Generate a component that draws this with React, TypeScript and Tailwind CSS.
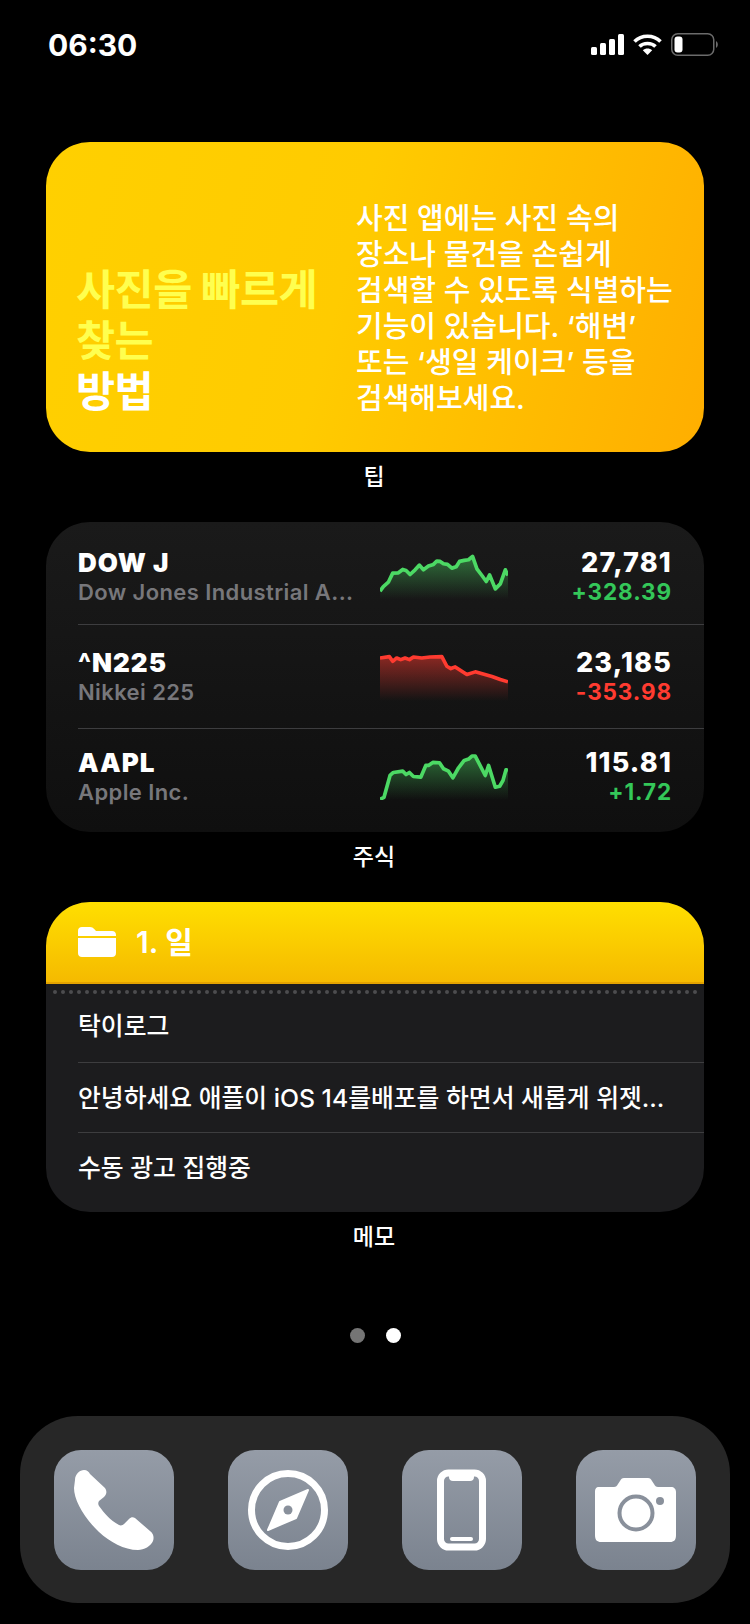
import React from "react";

type P = [number, number];

const series: { pts: P[]; top: number; bottom: number; color: string; id: string }[] = [
  {
    id: "g1", color: "#4cd964", top: 65, bottom: 205,
    pts: [[60,182],[70,168],[85,155],[98,128],[115,127],[128,117],[138,120],[150,132],[165,118],[178,104],[190,118],[205,107],[220,102],[230,92],[240,93],[250,100],[262,102],[275,113],[288,109],[298,93],[312,90],[325,88],[337,78],[350,115],[365,135],[378,153],[388,133],[405,175],[420,160],[435,118],[443,135]],
  },
  {
    id: "g2", color: "#ff3b30", top: 365, bottom: 510,
    pts: [[60,380],[88,376],[98,390],[110,380],[122,385],[135,380],[148,385],[160,377],[185,380],[210,377],[245,376],[260,405],[272,412],[285,407],[320,430],[345,422],[395,436],[420,445],[443,452]],
  },
  {
    id: "g3", color: "#4cd964", top: 665, bottom: 808,
    pts: [[60,806],[72,800],[90,735],[100,726],[128,722],[138,732],[148,726],[160,738],[182,740],[197,705],[205,705],[218,696],[238,697],[250,715],[265,722],[278,742],[295,712],[312,690],[325,686],[335,677],[345,677],[375,735],[385,705],[405,770],[418,767],[428,750],[437,718],[443,720]],
  },
];

function Spark({ i }: { i: number }) {
  const s = series[i];
  const h = s.bottom - s.top;
  const line = s.pts.map(([x, y]) => `${x - 60},${y - s.top}`).join(" ");
  return (
    <svg width="128" height={Math.round(h / 3)} viewBox={`0 0 383 ${h}`} preserveAspectRatio="none" className="block shrink-0">
      <defs>
        <linearGradient id={s.id} x1="0" y1="0" x2="0" y2="1">
          <stop offset="0" stopColor={s.color} stopOpacity={i === 1 ? 0.5 : 0.45} />
          <stop offset="1" stopColor={s.color} stopOpacity="0" />
        </linearGradient>
      </defs>
      <polygon points={`0,${h} ${line} 383,${h}`} fill={`url(#${s.id})`} />
      <polyline points={line} fill="none" stroke={s.color} strokeWidth="11" strokeLinejoin="round" />
    </svg>
  );
}

const stocks = [
  { sym: "DOW J", name: "Dow Jones Industrial A...", price: "27,781", chg: "+328.39", c: "text-[#34c759]", row: "h-[102px]", text: "mt-[10px]", chart: "mt-[4px]" },
  { sym: "^N225", name: "Nikkei 225", price: "23,185", chg: "-353.98", c: "text-[#ff3b30]", row: "h-[104px] border-t border-[#3d3d3f]", text: "mt-[3px]", chart: "mt-0" },
  { sym: "AAPL", name: "Apple Inc.", price: "115.81", chg: "+1.72", c: "text-[#34c759]", row: "h-[104px] border-t border-[#3d3d3f]", text: "mb-[6px]", chart: "mb-[9px]" },
];

function Label({ children }: { children: React.ReactNode }) {
  return <div className="h-[70px] pt-[10px] pr-[2px] text-center text-[23px] leading-[30px] font-medium text-white">{children}</div>;
}

function DockIcon({ children }: { children: React.ReactNode }) {
  return (
    <div className="w-[120px] h-[120px] rounded-[27px] bg-gradient-to-b from-[#959ca7] to-[#7b838f]">
      <svg width="120" height="120" viewBox="0 0 120 120">{children}</svg>
    </div>
  );
}

export default function App() {
  return (
    <div className="w-[750px] h-[1624px] bg-black overflow-hidden font-['Inter','Noto_Sans_CJK_KR',sans-serif] text-white">
      <div className="h-[142px] flex items-start justify-between pl-[48px] pr-[32px] pt-[26px]">
        <div className="text-[30px] leading-[38px] font-bold">06:30</div>
        <div className="flex items-center gap-[9px] pt-[7px]">
          <svg width="33" height="21" viewBox="0 0 33 21" fill="#fff">
            <rect x="0" y="13" width="6" height="8" rx="1.5" />
            <rect x="9" y="9" width="6" height="12" rx="1.5" />
            <rect x="18" y="5" width="6" height="16" rx="1.5" />
            <rect x="27" y="0" width="6" height="21" rx="1.5" />
          </svg>
          <svg width="29" height="21" viewBox="0 0 29 21" fill="none" stroke="#fff" strokeWidth="3.6">
            <path d="M1.5 7.5 C8.5 0.5 20.5 0.5 27.5 7.5" />
            <path d="M6.5 12.5 C10.5 8.5 18.5 8.5 22.5 12.5" />
            <path d="M14.5 21 L9.8 16.2 C12.5 13.8 16.5 13.8 19.2 16.2 Z" fill="#fff" stroke="none" />
          </svg>
          <svg width="47" height="23" viewBox="0 0 47 23" fill="none">
            <rect x="0.75" y="0.75" width="42" height="21.5" rx="6" stroke="#6b6b6b" strokeWidth="1.5" />
            <rect x="3.5" y="3.5" width="8" height="16" rx="3" fill="#fff" />
            <path d="M45 8 C46.3 8.7 46.8 10 46.8 11.5 C46.8 13 46.3 14.3 45 15 Z" fill="#6b6b6b" />
          </svg>
        </div>
      </div>

      <div className="mx-[46px]">
        <div className="h-[310px] rounded-[44px] bg-[linear-gradient(105deg,#ffd000_0%,#ffcb00_45%,#ffae00_100%)] flex justify-between">
          <div className="w-[270px] ml-[30px] mt-[122px] text-[42.5px] leading-[51px] font-bold tracking-[-0.5px] text-[#ffff4f] whitespace-nowrap">
            사진을 빠르게<br />찾는<br /><span className="text-white">방법</span>
          </div>
          <div className="w-[348px] mt-[59px] text-[29px] leading-[36px] font-medium text-white whitespace-nowrap">
            사진 앱에는 사진 속의<br />장소나 물건을 손쉽게<br />검색할 수 있도록 식별하는<br />기능이 있습니다. ‘해변’<br />또는 ‘생일 케이크’ 등을<br />검색해보세요.
          </div>
        </div>
        <Label>팁</Label>

        <div className="h-[310px] rounded-[44px] bg-gradient-to-b from-[#1a1a1a] to-[#0f0f0f] pl-[32px] flex flex-col">
          {stocks.map((s, i) => (
            <div key={s.sym} className={`flex items-center ${s.row}`}>
              <div className={`w-[302px] shrink-0 ${s.text}`}>
                <div className="text-[26px] leading-[28px] font-black tracking-[1px]">{s.sym}</div>
                <div className="text-[22px] leading-[30px] font-semibold tracking-[0.4px] text-[#77777b] whitespace-nowrap">{s.name}</div>
              </div>
              <div className={`shrink-0 ${s.chart}`}><Spark i={i} /></div>
              <div className={`flex-1 pr-[32px] text-right ${s.text}`}>
                <div className="text-[27px] leading-[28px] font-extrabold tracking-[1.2px]">{s.price}</div>
                <div className={`text-[22.5px] leading-[30px] font-bold tracking-[0.9px] ${s.c}`}>{s.chg}</div>
              </div>
            </div>
          ))}
        </div>
        <Label>주식</Label>

        <div className="h-[310px] rounded-[44px] bg-[#1c1c1e] overflow-hidden flex flex-col">
          <div className="h-[82px] shrink-0 bg-gradient-to-b from-[#ffdf00] to-[#f5ba00] border-b-[2px] border-[#e3a200] flex items-center pl-[32px] gap-[20px]">
            <svg width="38" height="30" viewBox="0 0 38 30" fill="#fff">
              <path d="M0 4 C0 1.5 1.5 0 4 0 H12 C14 0 15 .8 16.2 2 L18 4 H34 C36.5 4 38 5.5 38 8 V9 H0 Z" />
              <path d="M0 11 H38 V26 C38 28.5 36.5 30 34 30 H4 C1.5 30 0 28.5 0 26 Z" />
            </svg>
            <div className="text-[30px] leading-[36px] font-semibold">1. 일</div>
          </div>
          <div className="h-[10px] mt-[3px] mx-[7px] shrink-0 flex justify-between items-center">
            {Array.from({ length: 81 }, (_, i) => (
              <span key={i} className="block w-[4px] h-[4px] rounded-full bg-[#4c4c4f]" />
            ))}
          </div>
          <div className="pl-[32px] flex-1 flex flex-col text-[24.8px] font-medium">
            <div className="h-[65px] pb-[6px] flex items-center">탁이로그</div>
            <div className="h-[70px] pt-[2px] flex items-center border-t border-[#3d3d3f] whitespace-nowrap">안녕하세요 애플이 iOS 14를배포를 하면서 새롭게 위젯...</div>
            <div className="h-[70px] pt-[2px] flex items-center border-t border-[#3d3d3f]">수동 광고 집행중</div>
          </div>
        </div>
        <Label>메모</Label>
      </div>

      <div className="mt-[46px] flex justify-center gap-[21px]">
        <span className="block w-[15px] h-[15px] rounded-full bg-[#757575]" />
        <span className="block w-[15px] h-[15px] rounded-full bg-white" />
      </div>

      <div className="mt-[73px] mx-[20px] h-[187px] rounded-[58px] bg-[#272727] pt-[34px] px-[34px] flex gap-[54px]">
        <DockIcon>
          <path fill="#fff" d="M21 30 C21 24 26 20 30 20 C33 20 35 22 36 24 L51 38 C53 41 53 44 50 47 L45 51 C44 53 44 54 45 56 C50 63 56 70 65 75 C67 76 69 75 70 74 L75 69 C77 67 79 67 81 68 L96 81 C100 84 100 88 99 91 C97 96 90 100 84 100 C70 100 56 92 45 82 C30 68 20 50 20 38 Z" />
        </DockIcon>
        <DockIcon>
          <circle cx="60" cy="60" r="36.5" fill="none" stroke="#fff" strokeWidth="7" />
          <polygon points="80,40 68,68 40,80 52,52" fill="#fff" stroke="#fff" strokeWidth="2" strokeLinejoin="round" />
          <circle cx="60" cy="60" r="4.5" fill="#89909b" />
        </DockIcon>
        <DockIcon>
          <rect x="38.5" y="23" width="42" height="74" rx="8" fill="none" stroke="#fff" strokeWidth="7" />
          <path fill="#fff" d="M47 25 H72 V27 C72 29.5 70.5 31 68 31 H51 C48.5 31 47 29.5 47 27 Z" />
          <rect x="48" y="87" width="23" height="4" rx="2" fill="#fff" />
        </DockIcon>
        <DockIcon>
          <path fill="#fff" d="M23 37 H38 C40 37 41 36 42 34 L44 31 C45 29 46 28 48 28 H72 C74 28 75 29 76 31 L78 34 C79 36 80 37 82 37 H95 C98 37 100 39 100 42 V85 C100 90 98 92 94 92 H25 C21 92 19 90 19 85 V42 C19 39 20 37 23 37 Z" />
          <circle cx="60" cy="63" r="16.5" fill="#fff" stroke="#89909b" strokeWidth="4" />
          <circle cx="84" cy="51" r="4" fill="#89909b" />
        </DockIcon>
      </div>
    </div>
  );
}
